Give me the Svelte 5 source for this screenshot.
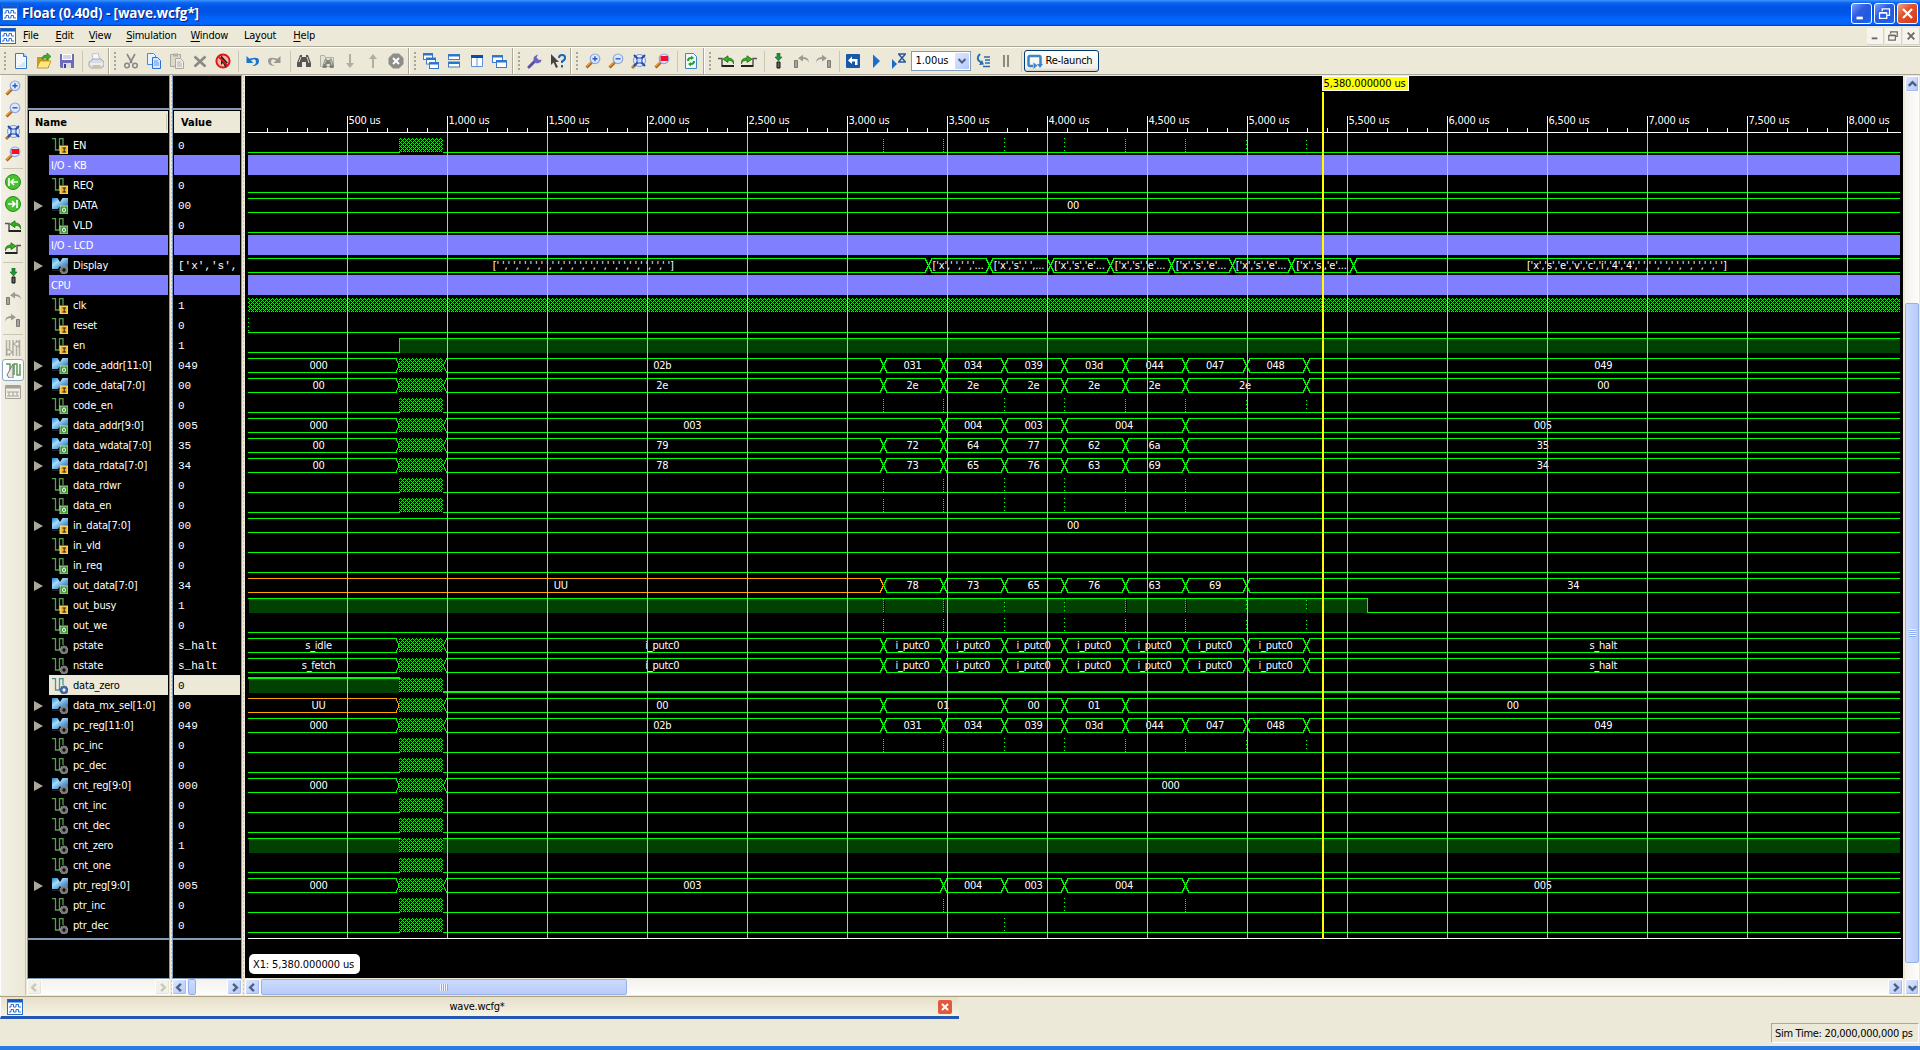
<script>
  // Signal rows: [name, value, kind, badge, wave]
  // kind: g = group divider, s = single bit, b = bus
  // badge: I = input, O = output, G = internal
  const T = [883, 943, 1004, 1064, 1125, 1185, 1246, 1306];
  const D = [928, 989, 1050, 1110, 1171, 1232, 1291, 1353];
  const START = 248;
  const END = 1900;
  const H0 = 399;
  const H1 = 443;
  const putc = Array(8).fill('i_putc0');

  const bus = (first, cuts, labels, opts = {}) => ({ t: 'bus', first, cuts, labels, ...opts });
  const low = (hatch = false, glitch = []) => ({ t: 'low', hatch, glitch });
  const flat = (label) => ({ t: 'bus', cuts: [], labels: [label] });

  const rows = [
    ['EN', '0', 's', 'I', low(true, T)],
    ['I/O - KB', '', 'g'],
    ['REQ', '0', 's', 'I', low()],
    ['DATA', '00', 'b', 'O', flat('00')],
    ['VLD', '0', 's', 'O', low()],
    ['I/O - LCD', '', 'g'],
    ['Display', "['x','s',", 'b', 'G', { t: 'bus', cuts: D, wide: true, labels: ["[' ',' ',' ',' ',' ',' ',' ',' ',' ',' ',' ',' ',' ',' ',' ',' ']", "['x',' ',' ','...", "['x','s',' ',...", "['x','s','e'...", "['x','s','e'...", "['x','s','e'...", "['x','s','e'...", "['x','s','e'...", "['x','s','e','v','c','i','4','4',' ',' ',' ',' ',' ',' ',' ',' ']"] }],
    ['CPU', '', 'g'],
    ['clk', '1', 's', 'I', { t: 'clock' }],
    ['reset', '0', 's', 'I', low(false, [248])],
    ['en', '1', 's', 'I', { t: 'rise' }],
    ['code_addr[11:0]', '049', 'b', 'O', bus('000', T, ['02b', '031', '034', '039', '03d', '044', '047', '048', '049'])],
    ['code_data[7:0]', '00', 'b', 'I', bus('00', [...T.slice(0, 6), 1306], ['2e', '2e', '2e', '2e', '2e', '2e', '2e', '00'])],
    ['code_en', '0', 's', 'O', low(true, T)],
    ['data_addr[9:0]', '005', 'b', 'O', bus('000', [943, 1004, 1064, 1185], ['003', '004', '003', '004', '005'])],
    ['data_wdata[7:0]', '35', 'b', 'O', bus('00', T.slice(0, 6), ['79', '72', '64', '77', '62', '6a', '35'])],
    ['data_rdata[7:0]', '34', 'b', 'I', bus('00', T.slice(0, 6), ['78', '73', '65', '76', '63', '69', '34'])],
    ['data_rdwr', '0', 's', 'O', low(true, T.slice(0, 6))],
    ['data_en', '0', 's', 'O', low(true, T.slice(0, 6))],
    ['in_data[7:0]', '00', 'b', 'I', flat('00')],
    ['in_vld', '0', 's', 'I', low()],
    ['in_req', '0', 's', 'O', low()],
    ['out_data[7:0]', '34', 'b', 'O', { t: 'bus', undef: true, cuts: T.slice(0, 7), labels: ['UU', '78', '73', '65', '76', '63', '69', '34'] }],
    ['out_busy', '1', 's', 'I', { t: 'busy' }],
    ['out_we', '0', 's', 'O', low(false, T)],
    ['pstate', 's_halt', 's', 'G', bus('s_idle', T, [...putc, 's_halt'])],
    ['nstate', 's_halt', 's', 'G', bus('s_fetch', T, [...putc, 's_halt'])],
    ['data_zero', '0', 's', 'G', { t: 'zero' }],
    ['data_mx_sel[1:0]', '00', 'b', 'G', bus('UU', [883, 1004, 1064, 1125], ['00', '01', '00', '01', '00'], { undef: true })],
    ['pc_reg[11:0]', '049', 'b', 'G', bus('000', T, ['02b', '031', '034', '039', '03d', '044', '047', '048', '049'])],
    ['pc_inc', '0', 's', 'G', low(true, T)],
    ['pc_dec', '0', 's', 'G', low(true)],
    ['cnt_reg[9:0]', '000', 'b', 'G', bus('000', [], ['000'])],
    ['cnt_inc', '0', 's', 'G', low(true)],
    ['cnt_dec', '0', 's', 'G', low(true)],
    ['cnt_zero', '1', 's', 'G', { t: 'high' }],
    ['cnt_one', '0', 's', 'G', low(true)],
    ['ptr_reg[9:0]', '005', 'b', 'G', bus('000', [943, 1004, 1064, 1185], ['003', '004', '003', '004', '005'])],
    ['ptr_inc', '0', 's', 'G', low(true, [943, 1064, 1185])],
    ['ptr_dec', '0', 's', 'G', low(true, [1004])],
  ].map(([name, value, kind, badge, wave], i) => ({ name, value, kind, badge, wave, y: 135 + 20 * i, sel: name === 'data_zero' }));

  // Splits a bus into segments with their outline path and label centre.
  function segments(w, y) {
    const out = [];
    const t = y + 3.5, b = y + 17.5, m = y + 10.5;
    const seg = (x0, x1, label, colour, o0, o1, cx) =>
      out.push({
        label, colour, cx,
        d: o0 + o1 === 0
          ? `M${x0} ${t}H${x1}M${x0} ${b}H${x1}`
          : `${o0 ? `M${x0} ${m}L${x0 + o0} ${t}` : `M${x0} ${t}`}H${x1 - o1}${o1 ? `L${x1} ${m}L${x1 - o1} ${b}` : `M${x1} ${b}`}H${x0 + o0}${o0 ? `L${x0} ${m}` : ''}`,
      });
    let start = START;
    let open = 0;
    if (w.first) {
      seg(START, H0, w.first, w.undef ? '#ffa500' : '#00ff00', 0, 3, 318.5);
      start = H1;
      open = 4;
    }
    const edges = [...w.cuts, END];
    edges.forEach((e, i) => {
      const last = i === edges.length - 1;
      const x0 = i === 0 ? start : edges[i - 1] + 0.5;
      const x1 = last ? END : e + 0.5;
      const shift = i === 0 && !w.first && w.cuts.length ? -5 : last && w.cuts.length ? 0 : -1;
      seg(x0, x1, w.labels[i], w.undef && !w.first && i === 0 ? '#ffa500' : '#00ff00', i === 0 ? open : 3.5, last ? 0 : 3.5, (x0 + x1) / 2 + shift);
    });
    return out;
  }

  const majors = Array.from({ length: 16 }, (_, i) => ({ x: 347 + i * 100, label: ((i + 1) * 500).toLocaleString('en-US') + ' us' }));
  const minors = Array.from({ length: 82 }, (_, i) => 267 + i * 20).filter((x) => (x - 247) % 100 !== 0 && x < 1900);

  const lens = '<path d="M1.5 14.5L7 9" stroke="#a8601c" stroke-width="3"/><path d="M1.5 13.5L6 9" stroke="#f0a040" stroke-width="1.4"/><circle cx="10" cy="5.8" r="4.8" fill="#dce8ff" stroke="#8ea6dc" stroke-width="1.2"/>';
  const sheet = (x, y, w, h) => `<rect x="${x}" y="${y}" width="${w}" height="${h}" fill="#fff" stroke="#3c7cc8"/><path d="M${x} ${y + 1}h${w}" stroke="#2a74d0" stroke-width="2"/>`;
  const bino = '<path d="M4 2h2v2h4V2h2l3 8v4h-5V9H6v5H1v-4z" fill="#555"/><path d="M3 9l2-5M11 4l2 6" stroke="#ddd"/>';
  const edgeL = '<path d="M0 5.500h4v7" fill="none" stroke="#555" stroke-width="1.500"/><path d="M3.500 13h12.500" stroke="#222" stroke-width="2"/>';
  const curveL = '<path d="M15 9Q14 5 9 5V7.5L4 4.2 9 .8V3Q15 3 15 9z"';
  const curveR = '<path d="M1 9Q2 5 7 5V7.5L12 4.2 7 .8V3Q1 3 1 9z"';
  const waveWin = '<rect x=".5" y=".5" width="15" height="15" fill="#fff" stroke="#2a6cc8"/><path d="M1 2h14" stroke="#1058c0" stroke-width="3"/><path d="M2 8h2V5.5h2.500V8h2.500V5.500h2.500V8H14M2 13h2v-2.500h2.500V13h2.500v-2.500h2.500V13H14" fill="none" stroke="#2c6cd8"/>';

  const icons = {
    wavewin: waveWin,
    new: '<path d="M2.500.5h8l3 3v12h-11z" fill="#f4f9ff" stroke="#3a78c4"/><path d="M10.500.5v3h3" fill="#bcd8f8" stroke="#3a78c4"/><path d="M4 14h8V8z" fill="#d4e6fb"/>',
    open: '<path d="M1 4h5l1 2h6v9H1z" fill="#c99b18"/><path d="M1 15l3-7h11l-3 7z" fill="#ffe680" stroke="#b98a10" stroke-width=".8"/><path d="M6 5Q7 1.500 11 2V0l4 3.500L11 7V5Q8 4.500 6 6z" fill="#3fae2c" stroke="#18780c" stroke-width=".6"/>',
    save: '<path d="M1 1h14v14H2L1 14z" fill="#6e6abc"/><path d="M3 1h10v6H3z" fill="#fff"/><path d="M4 3h8M4 5h8" stroke="#aab"/><path d="M4 10h8v5H4z" fill="#ddd"/><path d="M5 11h2v4H5z" fill="#443f98"/>',
    print: '<path d="M4 1l6-1 2 7H5z" fill="#f6f8fc" stroke="#b8c0cc"/><path d="M1 9l4-3h8l3 3v4l-3 2H3l-2-2z" fill="#d8dce4" stroke="#a4a8b4"/><path d="M2 11h13" stroke="#fff"/><path d="M5 13h7" stroke="#d8b870" stroke-width="1.500"/>',
    cut: '<path d="M4 1l5 9M12 1L7 10" stroke="#888" stroke-width="1.600"/><circle cx="4" cy="12.500" r="2.300" fill="none" stroke="#888" stroke-width="1.500"/><circle cx="12" cy="12.500" r="2.300" fill="none" stroke="#888" stroke-width="1.500"/>',
    copy: '<path d="M1.500.5h6l2 2v9h-8z" fill="#e8f2ff" stroke="#4a88d8"/><path d="M6.500 4.500h5l3 3v8h-8z" fill="#d8e9ff" stroke="#2c70c8"/><path d="M8 8h4M8 10h5M8 12h5" stroke="#5c98e0"/>',
    paste: '<path d="M1.500 1.500h10v12h-10z" fill="#dcdac8" stroke="#aaa89a"/><path d="M4 .5h5v3H4z" fill="#b4b2a4"/><path d="M6.500 5.500h5l3 3v7h-8z" fill="#f0eee4" stroke="#aaa89a"/><path d="M8 9h4M8 11h5M8 13h5" stroke="#b4b2a8"/>',
    x: '<path d="M2.500 3.500l11 10M13.500 3.500l-11 10" stroke="#8a8a84" stroke-width="2.600"/>',
    nosel: '<circle cx="8" cy="8" r="6.600" fill="#f8b8a8" stroke="#e01818" stroke-width="2"/><path d="M6 2v10l2-2 2 4 2-1-2-3h3z" fill="#222"/><path d="M3.500 3.500l9 9" stroke="#e01818" stroke-width="2"/>',
    undo: '<path d="M2.500 3v7h7L7 7.500Q12 4.500 12 9q0 2.500-4 4 7 0 7-5T5.500 5.800z" fill="#1c74cc"/>',
    redo: '<path d="M13.500 3v7h-7L9 7.500Q4 4.500 4 9q0 2.500 4 4-7 0-7-5t9.500-2.200z" fill="#9a9a94"/>',
    find: bino,
    findf: '<path d="M1.500 2.500h4l1 2h8v9h-13z" fill="#e4e2d4" stroke="#b4b2a4"/><g transform="translate(3 4) scale(.78)" opacity=".65">' + bino + '</g>',
    down: '<path d="M7 1h2v9h3l-4 5-4-5h3z" fill="#b0aea4"/>',
    up: '<path d="M7 15h2V6h3L8 1 4 6h3z" fill="#b0aea4"/>',
    stop: '<path d="M5 .5h6L15.500 5v6L11 15.500H5L.5 11V5z" fill="#8e8e88"/><path d="M5 5l6 6M11 5l-6 6" stroke="#fff" stroke-width="2"/>',
    cascade: sheet(0.5, 0.5, 9, 6) + sheet(3.5, 5, 9, 6) + sheet(6.5, 9.5, 9, 6),
    hsplit: sheet(2.5, 1.5, 11, 5) + sheet(2.5, 9, 11, 5),
    vsplit: '<path d="M2.500 2.500h11v11h-11zM8 2v12" fill="#fff" stroke="#5c94dc"/><path d="M2 3.500h12" stroke="#0a4ca8" stroke-width="3"/>',
    cascade2: sheet(0.5, 2.5, 10, 7) + sheet(4.5, 7.5, 10, 7),
    wrench: '<path d="M2 14l7-7" stroke="#5a52a8" stroke-width="3" stroke-linecap="round"/><path d="M9 2.500a4 4 0 1 0 5.500 4L12 7 9.500 4.500 11 1.500q-1 0-2 1z" fill="#6c64c0"/>',
    what: '<path d="M1 1v11l2.500-2.500L6 15l2-1-2.500-5H9z" fill="#444"/><path d="M9 5q0-3 3-3 3.200 0 3 3 0 2-3 3.500V10M12 12v2.500" fill="none" stroke="#1a64bc" stroke-width="2"/>',
    zin: lens + '<path d="M7.500 5.800h5M10 3.300v5" stroke="#2858b8" stroke-width="1.400"/>',
    zout: lens + '<path d="M7.500 5.800h5" stroke="#2858b8" stroke-width="1.400"/>',
    zfit: '<path d="M1 15l4-4" stroke="#c07828" stroke-width="3"/><circle cx="8.500" cy="7.500" r="6" fill="#e4ecff" stroke="#7890cc"/><path d="M3 2l11 11M14 2L3 13" stroke="#244cac" stroke-width="2"/><path d="M6 5h5v5H6z" fill="#c8dcfc" stroke="#244cac"/>',
    zred: lens + '<path d="M6.500 3h7.500v5H6.500z" fill="#f80c28"/>',
    refresh: '<path d="M2.500.5h8l3 3v12h-11z" fill="#f0f8ff" stroke="#3a88c4"/><path d="M4 8q0-4 4-4V2.500l3 2.500-3 2V5.800Q6 6 6 8zM12 8q0 4-4 4v1.500L5 11l3-2v1.200Q10 10 10 8z" fill="#28a028"/>',
    prevedge: edgeL + curveL + ' fill="#38b020" stroke="#146c0c" stroke-width=".8" transform="translate(1 2)"/>',
    nextedge: '<g transform="matrix(-1 0 0 1 16 0)">' + edgeL + '</g>' + curveR + ' fill="#38b020" stroke="#146c0c" stroke-width=".8" transform="translate(-1 2)"/>',
    marker: '<path d="M7 0h3v4h2L8.500 8 5 4h2z" fill="#209838" stroke="#0c5c18" stroke-width=".6"/><path d="M7 9h3v6H7z" fill="#666" stroke="#111"/>',
    prevmark: '<path d="M1.500 7.500h3v7h-3z" fill="#a4a29a" stroke="#7c7a74"/>' + curveL + ' fill="#9c9a92" transform="translate(1 1)"/>',
    nextmark: '<path d="M11.500 7.500h3v7h-3z" fill="#a4a29a" stroke="#7c7a74"/>' + curveR + ' fill="#9c9a92" transform="translate(-1 1)"/>',
    restart: '<rect x="1" y="1" width="14" height="14" rx="1" fill="#1858a8"/><path d="M12.500 12V6H7V3.500L3 7.500 7 11V8.500h3V12z" fill="#fff"/>',
    run: '<path d="M5 1.500L12 8l-7 7z" fill="#1c6cd0"/>',
    runfor: '<path d="M1 6l5 5-5 5z" fill="#1c6cd0"/><path d="M7 1h8M7 9h8M8 1.500L14 8.500M14 1.500L8 8.500" stroke="#285898" stroke-width="1.500"/>',
    step: '<path d="M5 1Q0 6 6 9.500" fill="none" stroke="#2070b8" stroke-width="2"/><path d="M4 12l5-.5-2-4.500z" fill="#2070b8"/><path d="M9 4h6M10 7h5M10 10h5M8 13.500h7" stroke="#2c68b0" stroke-width="1.300"/>',
    pause: '<path d="M6 2v12M10 2v12" stroke="#8c8a84" stroke-width="2"/>',
    relaunch: '<path d="M6 13H3q-1.500 0-1.500-1.500v-7Q1.500 3 3 3h9q1.500 0 1.500 1.500v7" fill="none" stroke="#3a86cc" stroke-width="2.500"/><path d="M6.500 9.500v6.500l4-3.500zM10 11h6l-3 4z" fill="#3a86cc"/>',
    goleft: '<circle cx="8" cy="8" r="7.500" fill="#48c030" stroke="#209018"/><path d="M4 4v8M13 8H6M9 5L6 8l3 3" fill="none" stroke="#fff" stroke-width="1.600"/>',
    goright: '<circle cx="8" cy="8" r="7.500" fill="#48c030" stroke="#209018"/><path d="M12 4v8M3 8h7M7 5l3 3-3 3" fill="none" stroke="#fff" stroke-width="1.600"/>',
    swap: '<path d="M1.500 0v16M4.500 0v16M11.500 0v16M14.500 0v16M8 0v16" stroke="#b0aea4" stroke-width="1.500"/><path d="M14 1v6L8 4zM2 9v6l6-3z" fill="#f4f2e8" stroke="#a09e94"/>',
    snap: '<path d="M1 2h4v10M9 13V2h3v11h3V2" fill="none" stroke="#5c9c5c" stroke-width="1.500"/><path d="M8 2v14H4l-2-3z" fill="#e8e8e8" stroke="#777"/>',
    table: '<path d="M.5 1.500h15v13H.5z" fill="#f0eee6" stroke="#a4a298"/><path d="M1 3h14" stroke="#a4a298" stroke-width="3"/><path d="M2 8h12M2 12h12" stroke="#a4a298"/><path d="M4 8v4M8 8v4M12 8v4" stroke="#a4a298"/>',
  };

  const toolGroups = [
    ['new', 'open', 'save', '|', 'print'],
    ['cut', 'copy', 'paste', 'x', 'nosel', '|', 'undo', 'redo', '|', 'find', 'findf', 'down', 'up', 'stop'],
    ['cascade', 'hsplit', 'vsplit', 'cascade2'],
    ['wrench', 'what'],
    ['zin', 'zout', 'zfit', 'zred', '|', 'refresh'],
    ['prevedge', 'nextedge', '|', 'marker', 'prevmark', 'nextmark', '|', 'restart', 'run', 'runfor', 'combo', 'step', 'pause', '|', 'launch'],
  ];
  const sideTools = ['zin', 'zout', 'zfit', 'zred', '|', 'goleft', 'goright', 'prevedge', 'nextedge', '|', 'marker', 'prevmark', 'nextmark', '|', 'swap', 'snap', 'table'];
  const menus = [['', 'F', 'ile', 16], ['', 'E', 'dit', 17], ['', 'V', 'iew', 21], ['', 'S', 'imulation', 48], ['', 'W', 'indow', 37], ['La', 'y', 'out', 33], ['', 'H', 'elp', 21]];
</script>

{#snippet icon(name)}
  <svg class="icon" viewBox="0 0 16 16" fill="none">{@html icons[name]}</svg>
{/snippet}

{#snippet arrow(dir, off = false)}
  <span class="sbtn" class:off>
    <svg viewBox="0 0 14 14" class="chev {dir}"><path d="M8.500 3L4.500 7l4 4" fill="none" stroke={off ? '#c9c7ba' : '#4d6185'} stroke-width="2.600" /></svg>
  </span>
{/snippet}

{#snippet signal(kind, badge, sel)}
  <svg class="icon" viewBox="0 0 16 16">
    {#if kind === 'b'}
      <path d="M0 0h5.500l2.500 4 2.500-4h5.500v11H0z" fill="url(#blue)" />
      <path d="M6 11l2-3 2 3z" fill="#000" />
      <path d="M0 12.500h9" stroke="#222" />
    {:else}
      <path d="M0 .5h3.500v11.500h4V.5h3.500V7" fill="none" stroke={sel ? '#4c9494' : '#5c9c54'} stroke-width="1.300" />
    {/if}
    {#if badge === 'G'}
      <circle cx="12" cy="12" r="4" fill={sel ? '#4468a8' : '#777'} stroke={sel ? '#34548c' : '#aaa'} stroke-dasharray="1.500 1" />
      <path d="M10 12h4M12 10v4" stroke={sel ? '#dce8ff' : '#111'} stroke-width="1.200" />
      <circle cx="12" cy="12" r="1" fill={sel ? '#fff' : '#111'} />
    {:else if badge === 'I'}
      <rect x="8" y="8" width="8" height="8" fill="#f4b428" stroke="#fff0b0" stroke-width=".8" />
      <path d="M10.500 10h3.500M10.500 14h3.500M12.200 10v4" stroke="#222" />
    {:else}
      <rect x="8" y="8" width="8" height="8" fill="#3c9434" stroke="#d4ecc8" stroke-width=".8" />
      <ellipse cx="12" cy="12" rx="1.500" ry="2" fill="none" stroke="#fff" />
    {/if}
  </svg>
{/snippet}

<svg class="defs" aria-hidden="true">
  <defs>
    <linearGradient id="blue" x1="0" x2="1" y1="0" y2="1">
      <stop offset="0" stop-color="#1c80c4" /><stop offset=".35" stop-color="#a4dcfc" /><stop offset="1" stop-color="#0858a8" />
    </linearGradient>
  </defs>
</svg>

<div class="window">
  <header class="title">
    {@render icon('wavewin')}
    <span class="caption">Float (0.40d) - [wave.wcfg*]</span>
    <span class="wbtn"><svg viewBox="0 0 21 21"><path d="M5 15.500h7" stroke="#fff" stroke-width="3" /></svg></span>
    <span class="wbtn"><svg viewBox="0 0 21 21"><path d="M8 8V5.500h8v7h-2.500M5 10h8v6H5zM8 5.500h8M5 9.500h8" fill="none" stroke="#fff" stroke-width="1.400" /></svg></span>
    <span class="wbtn close"><svg viewBox="0 0 21 21"><path d="M5.500 5.500l10 10M15.500 5.500l-10 10" stroke="#fff" stroke-width="2.400" /></svg></span>
  </header>

  <nav class="menu">
    {@render icon('wavewin')}
    <div class="items">
      {#each menus as [pre, key, post, w]}
        <span style:width="{w}px">{pre}<u>{key}</u>{post}</span>
      {/each}
    </div>
    <span class="mbtn"><svg viewBox="0 0 17 17"><path d="M5 11h6" stroke="#6c6a60" stroke-width="2" /></svg></span>
    <span class="mbtn"><svg viewBox="0 0 17 17"><path d="M6 6V4h7v5h-2M4 8h7v5H4zM4 7.500h7M6 4h7" fill="none" stroke="#6c6a60" stroke-width="1.300" /></svg></span>
    <span class="mbtn"><svg viewBox="0 0 17 17"><path d="M5 5l7 7M12 5l-7 7" stroke="#6c6a60" stroke-width="2" /></svg></span>
  </nav>

  <div class="tools">
    {#each toolGroups as group, gi}
      <div class="group" class:last={gi === toolGroups.length - 1}>
        <i class="handle"></i>
        {#each group as t}
          {#if t === '|'}
            <i class="sep"></i>
          {:else if t === 'combo'}
            <span class="combo"><span>1.00us</span><b><svg viewBox="0 0 10 10"><path d="M1.500 3L5 6.500 8.500 3" fill="none" stroke="#4d6185" stroke-width="2" /></svg></b></span>
          {:else if t === 'launch'}
            <button class="launch">{@render icon('relaunch')}<span>Re-launch</span></button>
          {:else}
            <span class="cell">{@render icon(t)}</span>
          {/if}
        {/each}
      </div>
    {/each}
  </div>

  <main class="work">
    <aside class="side">
      {#each sideTools as t}
        {#if t === '|'}
          <i class="hsep"></i>
        {:else}
          <span class="scell" class:active={t === 'snap'}>{@render icon(t)}</span>
        {/if}
      {/each}
    </aside>

    <section class="col names">
      <div class="pane">
        <div class="blank"></div>
        <div class="head">Name</div>
        <div class="list">
          {#each rows as r}
            <div class="row">
              <span class="gutter">{#if r.kind === 'b'}<i class="tri"></i>{/if}</span>
              <div class="cellname" class:purple={r.kind === 'g'} class:sel={r.sel}>
                {#if r.kind !== 'g'}{@render signal(r.kind, r.badge, r.sel)}{/if}
                <span>{r.name}</span>
              </div>
            </div>
          {/each}
        </div>
        <div class="foot"></div>
      </div>
      <div class="hbar">{@render arrow('left', true)}<span class="grow"></span>{@render arrow('right', true)}</div>
    </section>

    <i class="split"></i>

    <section class="col values">
      <div class="pane">
        <div class="blank"></div>
        <div class="head">Value</div>
        <div class="list">
          {#each rows as r}
            <div class="val" class:purple={r.kind === 'g'} class:sel={r.sel}>{r.value}</div>
          {/each}
        </div>
        <div class="foot"></div>
      </div>
      <div class="hbar">{@render arrow('left')}<span class="thumb small"></span><span class="grow"></span>{@render arrow('right')}</div>
    </section>

    <i class="split wide"></i>

    <section class="waves">
      <svg class="plot" viewBox="245 76 1658 902" shape-rendering="crispEdges">
        <defs>
          <pattern id="hatch" width="4" height="4" patternUnits="userSpaceOnUse">
            <path d="M2 0h1v1h-1zM1 1h1v1h-1zM3 1h1v1h-1zM0 2h1v1h-1zM1 3h1v1h-1zM3 3h1v1h-1z" fill="#00ff00" />
          </pattern>
        </defs>
        <rect x="245" y="76" width="1658" height="902" fill="#000" />
        {#each rows as r}
          {@const w = r.wave}
          {@const y = r.y}
          {#if r.kind === 'g'}
            <rect x={START} {y} width={END - START} height="20" fill="#8080ff" />
          {:else if w.t === 'clock'}
            <rect x={START} y={y + 3} width={END - START} height="14" fill="url(#hatch)" />
          {:else if w.t === 'bus'}
            {#each segments(w, y) as s}
              <path d={s.d} fill="none" stroke={s.colour} />
              <text class="lab" class:wide={w.wide} x={s.cx} y={y + 14} text-anchor="middle">{s.label}</text>
            {/each}
            {#if w.first}<rect x={H0} y={y + 3} width={H1 - H0} height="14" fill="url(#hatch)" />{/if}
          {:else if w.t === 'low'}
            <path d={w.hatch ? `M${START} ${y + 17.5}H400M${H1} ${y + 17.5}H${END}` : `M${START} ${y + 17.5}H${END}`} stroke="#00ff00" />
            {#if w.hatch}<rect x={H0} y={y + 3} width={H1 - H0} height="14" fill="url(#hatch)" />{/if}
            {#each w.glitch as g}<rect x={g} y={y + 3} width="1" height="14" fill="url(#hatch)" />{/each}
          {:else if w.t === 'rise'}
            <rect x="400" y={y + 4} width="1500" height="14" fill="#004000" />
            <path d="M{START} {y + 17.5}H399.500V{y + 3.5}H{END}" fill="none" stroke="#00ff00" />
          {:else if w.t === 'busy'}
            <rect x="249" y={y + 4} width="1118" height="14" fill="#004000" />
            {#each T as g}
              <rect x={g + 1} y={y + 4} width="1" height="14" fill="#001000" />
              <rect x={g} y={y + 4} width="1" height="13" fill="url(#hatch)" />
            {/each}
            <path d="M{START} {y + 3.5}H1367.500V{y + 17.5}H{END}" fill="none" stroke="#00ff00" />
          {:else if w.t === 'zero'}
            <rect x="249" y={y + 4} width="150" height="14" fill="#004000" />
            <path d="M{START} {y + 3}H400M{H1} {y + 17}H{END}" stroke="#00ff00" stroke-width="2" />
            <rect x={H0} y={y + 3} width={H1 - H0} height="14" fill="url(#hatch)" />
          {:else if w.t === 'high'}
            <rect x="249" y={y + 4} width="150" height="14" fill="#004000" />
            <rect x={H1} y={y + 4} width={END - H1} height="14" fill="#004000" />
            <path d="M{START} {y + 3.5}H400M{H1} {y + 3.5}H{END}" stroke="#00ff00" />
            <rect x={H0} y={y + 3} width={H1 - H0} height="14" fill="url(#hatch)" />
          {/if}
        {/each}
        {#each majors as m}
          <path d="M{m.x + 0.5} 133V938" stroke="#c0c0c0" />
          <path d="M{m.x + 0.5} 116V132" stroke="#fff" />
          <text class="lab" x={m.x + 1.5} y="124">{m.label}</text>
        {/each}
        {#each minors as x}<path d="M{x + 0.5} 128V132" stroke="#fff" />{/each}
        <path d="M248 132.500H1901M248 938.500H1901" stroke="#fff" />
        <path d="M1323 92V939" stroke="#ff0" stroke-width="2" />
        <rect x="1322.500" y="76.500" width="86" height="14" fill="#ff0" stroke="#fff" />
        <text class="lab dark" x="1323.500" y="87" textLength="82">5,380.000000 us</text>
        <rect x="249" y="954" width="111" height="20" rx="5" fill="#fff" shape-rendering="auto" />
        <text class="lab dark" x="253" y="968" textLength="101">X1: 5,380.000000 us</text>
      </svg>
      <div class="hbar">{@render arrow('left')}<span class="thumb long"><i class="grip"></i></span><span class="grow"></span>{@render arrow('right')}</div>
    </section>

    <div class="vbar">
      {@render arrow('up')}
      <span class="vthumb"><i class="vgrip"></i></span>
      {@render arrow('down')}
    </div>
  </main>

  <div class="tabs">
    <div class="tab">
      {@render icon('wavewin')}
      <span class="tabname">wave.wcfg*</span>
      <span class="tabx"><svg viewBox="0 0 14 14"><path d="M4 4l6 6M10 4l-6 6" stroke="#fff" stroke-width="2" /></svg></span>
    </div>
  </div>

  <footer class="status"><span>Sim Time: 20,000,000,000 ps</span></footer>
</div>

<style>
  :global(body) { background: #ece9d8; overflow: hidden; }
  .window {
    width: 1920px; height: 1050px; display: flex; flex-direction: column; box-sizing: border-box;
    background: #ece9d8; border-bottom: 4px solid #2a7ae2; color: #000;
    font: 11px/14px "DejaVu Sans Condensed", "DejaVu Sans", sans-serif; letter-spacing: -0.25px; overflow: hidden;
  }
  .defs { width: 0; height: 0; position: absolute; }
  svg { display: block; }
  .icon { width: 16px; height: 16px; flex: none; }

  .title {
    height: 26px; flex: none; display: flex; align-items: center; gap: 2px; padding: 0 2px; box-sizing: border-box;
    background: linear-gradient(#3c94fc 0, #0a62f0 3px, #0054e3 7px, #0055e6 13px, #0068ff 20px, #0066fc 24px, #0038c8 26px);
  }
  .caption {
    flex: 1; margin-left: 2px; color: #fff; font: bold 13.5px/20px "Open Sans", sans-serif; letter-spacing: -0.12px;
    text-shadow: 1px 1px 0 #0a1883;
  }
  .wbtn {
    width: 21px; height: 21px; box-sizing: border-box; border: 1px solid #fff; border-radius: 3px;
    background: linear-gradient(135deg, #7ca2f4, #2c5ce4 40%, #2458e0 70%, #1a6cf4);
  }
  .wbtn.close { background: linear-gradient(135deg, #f0a48c, #e05430 40%, #d84420 75%, #c43c14); }
  .wbtn svg { width: 19px; height: 19px; }

  .menu { height: 21px; flex: none; display: flex; align-items: center; gap: 1px; box-sizing: border-box; border-bottom: 1px solid #aca899; }
  .items { flex: 1; display: flex; gap: 16.4px; padding-left: 6px; }
  .items span { white-space: nowrap; }
  .items u { text-underline-offset: 2px; text-decoration-thickness: 1px; }
  .mbtn { width: 17px; height: 17px; background: #f5f4ee; border-right: 1px solid #d8d5c6; border-bottom: 1px solid #d8d5c6; box-sizing: border-box; }

  .tools { height: 28px; flex: none; display: flex; box-sizing: border-box; border-top: 1px solid #fff; border-bottom: 1px solid #aca899; }
  .group { display: flex; align-items: center; padding-right: 0.5px; border-right: 1px solid #aca899; box-shadow: 1px 0 0 #fff; margin-right: 1px; }
  .group.last { border: 0; box-shadow: none; }
  .handle {
    width: 9.5px; height: 18px; flex: none;
    background: radial-gradient(circle at 1px 1px, #a8a593 1px, transparent 1.2px) 4px 0 / 10px 4px;
  }
  .cell { width: 23px; display: grid; place-items: center; }
  .sep { width: 6px; height: 21px; background: linear-gradient(#c9c6b4, #c9c6b4) 3px 0 / 1px 21px no-repeat; }
  .combo {
    width: 60px; height: 20px; display: flex; align-items: center; box-sizing: border-box; margin-right: 1px;
    border: 1px solid #7f9db9; background: #fff; padding: 0 1px 0 4px;
  }
  .combo span { flex: 1; letter-spacing: -0.1px; }
  .combo b { width: 14px; height: 16px; display: grid; place-items: center; border-radius: 1px; background: linear-gradient(135deg, #e0e8ff, #b4c8f8); }
  .combo svg { width: 10px; height: 10px; }
  .launch {
    width: 75px; height: 22px; display: flex; align-items: center; gap: 3px; padding: 0 0 0 2px; box-sizing: border-box;
    border: 1px solid #003c74; border-radius: 3px; background: linear-gradient(#fff, #f0efe8 85%, #d8d0c4);
    font: inherit; letter-spacing: inherit; color: #000;
  }

  .work { flex: none; height: 920px; display: flex; box-sizing: border-box; }
  .side {
    width: 26px; flex: none; display: flex; flex-direction: column; align-items: center; padding-top: 2px; box-sizing: border-box;
    border-left: 1px solid #fff; border-right: 1px solid #c8c4b0; background: linear-gradient(90deg, #f2f0e4, #ece9d8);
  }
  .scell { width: 22px; height: 22px; display: grid; place-items: center; box-sizing: border-box; }
  .scell.active { border: 1px solid #8ca8c8; border-radius: 3px; background: #fdfdfb; }
  .hsep { width: 20px; height: 6px; background: linear-gradient(#c9c6b4, #c9c6b4) 0 3px / 20px 1px no-repeat; }

  .col { display: flex; flex-direction: column; flex: none; }
  .names { width: 143px; margin-left: 1px; }
  .values { width: 70px; }
  .pane {
    height: 904px; box-sizing: border-box; display: flex; flex-direction: column; background: #000;
    border: 1px solid #7f9db9;
  }
  .blank { height: 32px; flex: none; border-bottom: 2px solid #7f9db9; }
  .head {
    height: 22px; flex: none; margin: 1px 1px 2px; padding: 1px 0 0 6px; background: #ece9d8; box-sizing: border-box;
    font-weight: bold; line-height: 22px; letter-spacing: 0;
  }
  .values .head { padding-left: 7px; }
  .names .head { background: linear-gradient(#c9c6b4, #c9c6b4) 137px 3px / 1px 16px no-repeat, #ece9d8; }
  .list { height: 800px; flex: none; color: #fff; }
  .foot { margin-top: 3px; height: 38px; border-top: 2px solid #7f9db9; }
  .row { height: 20px; display: flex; }
  .gutter { width: 21px; padding: 6px 0 0 6px; box-sizing: border-box; }
  .tri { display: block; width: 0; height: 0; border-left: 9px solid #aca899; border-top: 5.5px solid transparent; border-bottom: 5.5px solid transparent; }
  .cellname { flex: 1; display: flex; align-items: center; gap: 5px; padding: 1px 0 0 3px; margin-right: 1px; white-space: nowrap; letter-spacing: -0.2px; }
  .val {
    height: 20px; margin: 0 1px; padding: 1px 0 0 4px; line-height: 20px; white-space: nowrap; overflow: hidden; box-sizing: border-box;
    font-family: "Liberation Mono", monospace; letter-spacing: 0;
  }
  .purple { background: #8080ff; }
  .cellname.purple { padding-left: 2px; }
  .sel { background: #ece9d8; color: #000; }
  .split { width: 2px; flex: none; background: radial-gradient(circle, #cfc8b4 0.8px, transparent 1px) 0 304px / 3px 4px, #f2ead8; }
  .split.wide { width: 3px; }

  .hbar { height: 16px; display: flex; gap: 1px; background: linear-gradient(#f3f1ec, #fefefb); }
  .grow { flex: 1; }
  .sbtn {
    width: 15px; height: 16px; flex: none; box-sizing: border-box; border: 1px solid #fff; border-radius: 2px;
    background: linear-gradient(135deg, #dbe5ff, #b6c9f7); display: grid; place-items: center; box-shadow: inset -1px -1px 0 #a4baf0;
  }
  .sbtn.off { background: #f2f1ea; box-shadow: inset -1px -1px 0 #e4e2d6; }
  .chev { width: 13px; height: 13px; }
  .right { transform: rotate(180deg); }
  .up { transform: rotate(90deg); }
  .down { transform: rotate(-90deg); }
  .thumb { border: 1px solid #98b0e8; border-radius: 2px; box-sizing: border-box; background: linear-gradient(#cbdaff, #b8ccfa); }
  .thumb.small { width: 8px; }
  .thumb.long { width: 366px; display: grid; place-items: center; }
  .grip { width: 8px; height: 7px; background: repeating-linear-gradient(90deg, #eef4ff 0 1px, #8cb0f8 1px 2px); }

  .waves { width: 1658px; flex: none; display: flex; flex-direction: column; }
  .plot { width: 1658px; height: 902px; margin-top: 1px; flex: none; margin-bottom: 1px; }
  .lab { fill: #fff; font: 11px "DejaVu Sans Condensed", "DejaVu Sans", sans-serif; letter-spacing: -0.25px; }
  .lab.wide { letter-spacing: -0.17px; }
  .lab.dark { fill: #000; }

  .vbar {
    flex: 1; margin: 1px 1px 0 2px; display: flex; flex-direction: column; align-items: stretch; gap: 1px;
    background: linear-gradient(90deg, #f3f1ec, #fefefb);
  }
  .vbar .sbtn { width: 14px; }
  .vthumb {
    height: 660px; margin-top: auto; margin-bottom: 15px; border: 1px solid #98b0e8; border-radius: 2px; box-sizing: border-box;
    background: linear-gradient(90deg, #cbdaff, #b8ccfa); display: grid; place-items: center;
  }
  .vgrip { width: 7px; height: 8px; background: repeating-linear-gradient(#eef4ff 0 1px, #8cb0f8 1px 2px); }

  .tabs { height: 23px; flex: none; border-top: 1px solid #aca080; margin-top: 1px; display: flex; box-sizing: border-box; }
  .tab {
    width: 959px; display: flex; align-items: center; padding: 0 7px 0 6px; box-sizing: border-box;
    background: linear-gradient(#e4e0cc, #f6f3e0); border-bottom: 3px solid #2458b4; border-left: 1px solid #fff;
  }
  .tabname { flex: 1; text-align: center; padding-right: 7px; }
  .tabx { width: 14px; height: 14px; border-radius: 2px; background: #e4583c; }

  .status { flex: 1; display: flex; justify-content: flex-end; padding: 4px 1px 3px; }
  .status span {
    width: 148px; box-sizing: border-box; padding: 3px 0 0 3px; white-space: nowrap; letter-spacing: -0.3px;
    border: 1px solid; border-color: #aca899 #fff #fff #aca899;
  }
</style>
